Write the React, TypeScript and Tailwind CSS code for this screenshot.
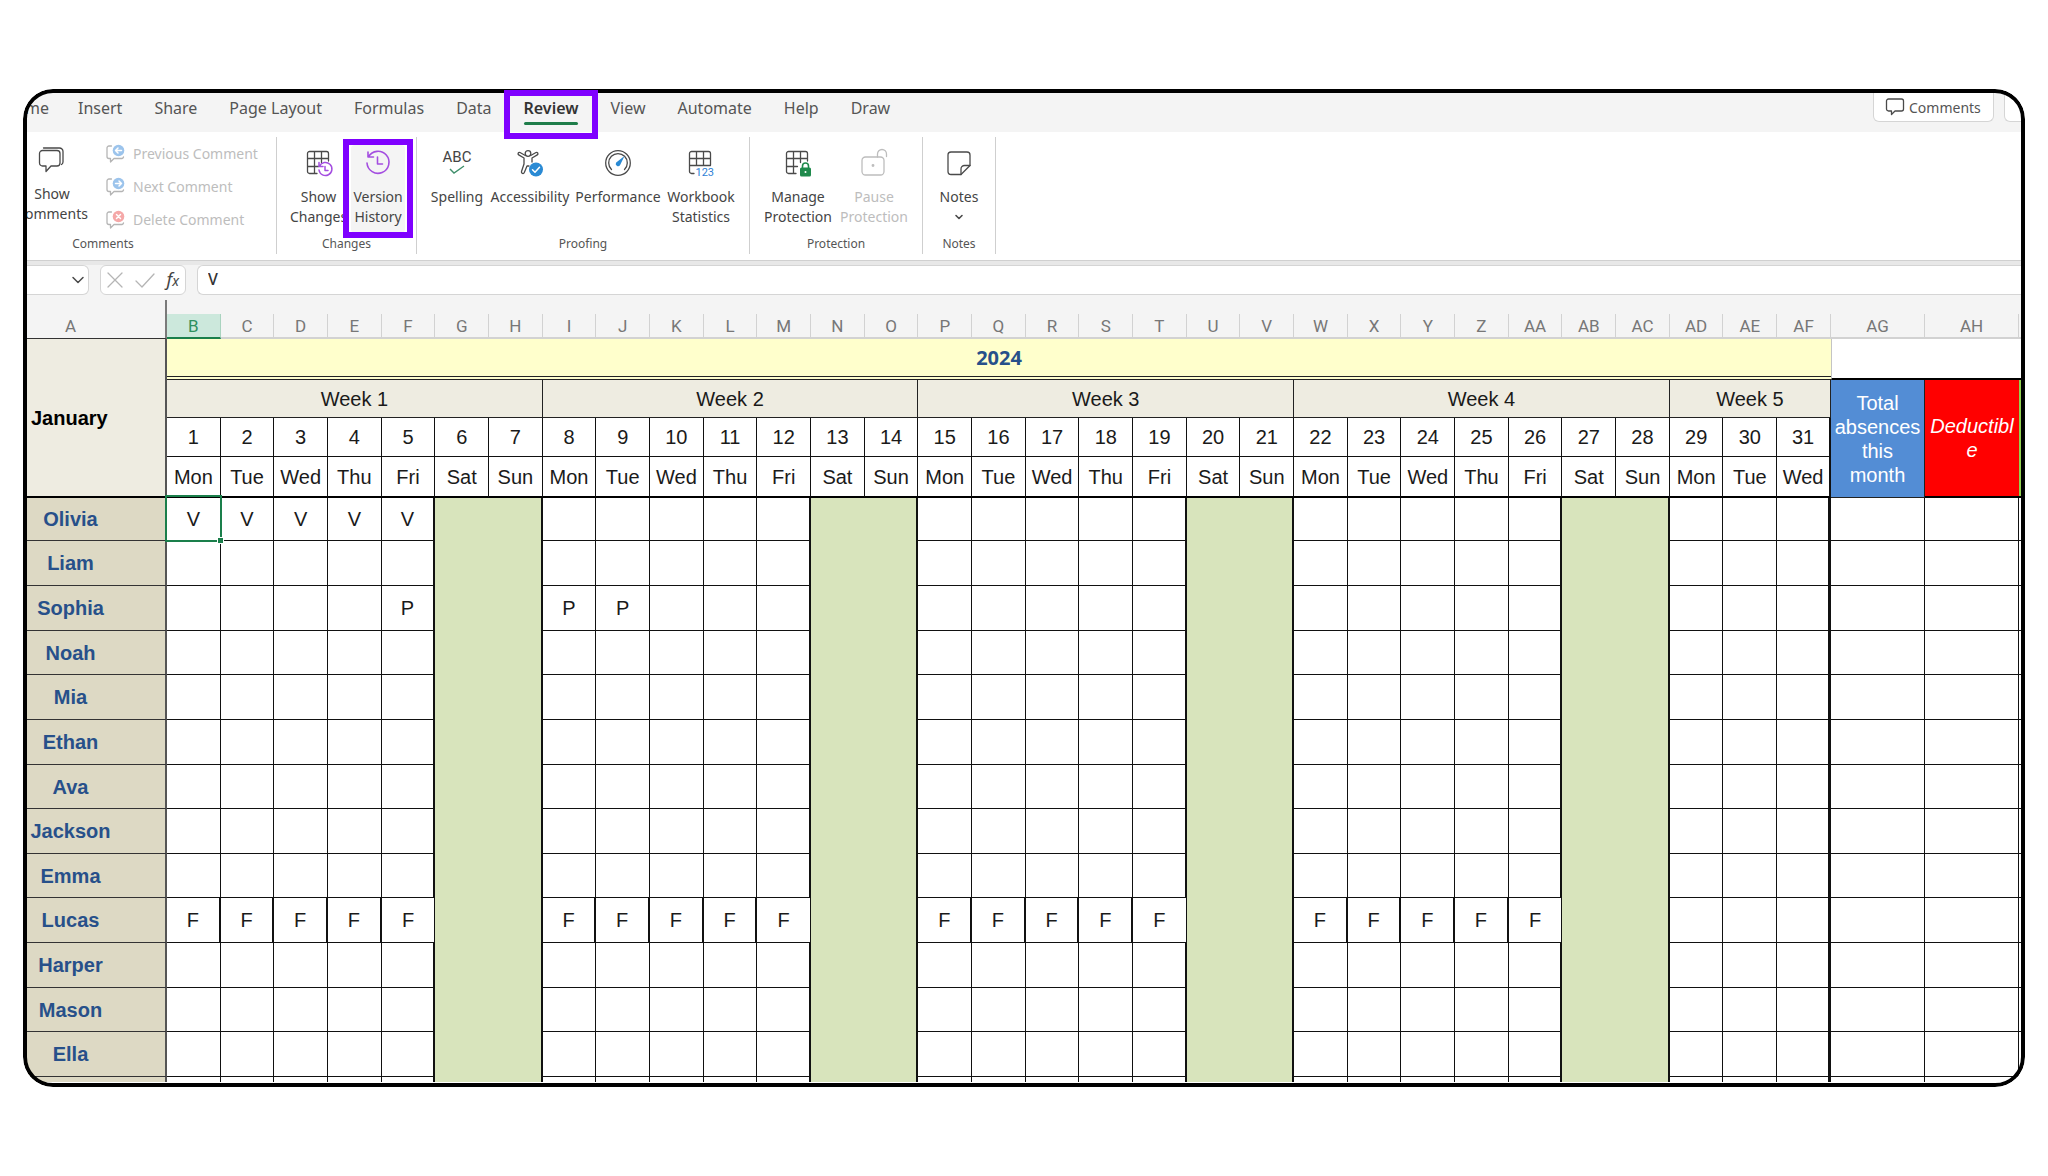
import type { ReactNode } from "react";

type IconProps = { children: ReactNode; className?: string; box?: string };

function Icon({ children, className = "size-7", box = "0 0 28 28" }: IconProps) {
  return (
    <svg
      viewBox={box}
      className={`overflow-visible ${className}`}
      fill="none"
      stroke="#4a4a4a"
      strokeWidth="1.3"
      strokeLinecap="round"
      strokeLinejoin="round"
      aria-hidden="true"
    >
      {children}
    </svg>
  );
}

const ShowCommentsIcon = () => (
  <Icon>
    <path d="M4.500 4.500H19a3 3 0 0 1 3 3V17a3 3 0 0 1-3 3H13L8 25.500V20H4.500a3 3 0 0 1-3-3V7.500a3 3 0 0 1 3-3Z" />
    <path d="M5.500 2H21.500a3.500 3.500 0 0 1 3.500 3.500v10.500a3 3 0 0 1-1.500 2.500" />
  </Icon>
);

const BubbleIcon = ({ color, mark }: { color: string; mark: string }) => (
  <Icon className="size-5" box="0 0 20 20">
    <path stroke="#b5b5b5" d="M6.500 2H4a2 2 0 0 0-2 2v8.500a2 2 0 0 0 2 2h1.500V18l3.500-3.500h8a2 2 0 0 0 1.500-1.500" />
    <circle cx="13.500" cy="6.500" r="5.800" fill={color} stroke="none" />
    <path stroke="#fff" strokeWidth="1.500" d={mark} />
  </Icon>
);

const GridLines = () => (
  <path d="M4.500 2.500h17a2 2 0 0 1 2 2V12M12 24.500H4.500a2 2 0 0 1-2-2v-18a2 2 0 0 1 2-2M2.500 9.500h21M2.500 17.500h11M9.500 2.500v22M16.500 2.500v11" />
);

const ShowChangesIcon = () => (
  <Icon>
    <GridLines />
    <g stroke="#a44ee0" strokeWidth="1.5">
      <path d="M14 13.500v4h4M14.500 17.300a6.500 6.500 0 1 1-.5 3.700" />
      <path d="M20 17.500v4h3" />
    </g>
  </Icon>
);

const HistoryIcon = () => (
  <Icon>
    <g stroke="#a44ee0" strokeWidth="1.6">
      <path d="M4 3v5h5.500M4.500 7.700A11 11 0 1 1 3 14" />
      <path d="M13.500 8v7h5" />
    </g>
  </Icon>
);

const SpellingIcon = () => (
  <span className="relative flex h-7 justify-center text-[15px] leading-4">
    <span className="font-['Roboto',sans-serif]">ABC</span>
    <svg viewBox="0 0 16 9" className="absolute top-4 h-[9px] w-4" fill="none" stroke="#3f8f6b" strokeWidth="1.4" aria-hidden="true">
      <path d="M1 4l4 4L15 1" />
    </svg>
  </span>
);

const AccessibilityIcon = () => (
  <Icon>
    <circle cx="12" cy="4.500" r="2.800" />
    <path d="M9.300 6.500 4 3.500C2.500 2.800 1.200 5 2.700 5.900L8 9v6l-2.500 7.500c-.5 2 2 2.800 2.800 1l2.700-6.500h2M14.700 6.500 20 3.500c1.500-.7 2.800 1.500 1.300 2.400L16 9v4" />
    <circle cx="20" cy="20.500" r="7" fill="#2a8ad4" stroke="none" />
    <path stroke="#fff" strokeWidth="1.500" d="m16.500 20.700 2.500 2.500 4.500-5" />
  </Icon>
);

const PerformanceIcon = () => (
  <Icon>
    <circle cx="14" cy="14" r="12.300" />
    <path d="M7.500 20.500a9.300 9.300 0 1 1 13 0" />
    <path fill="#2a8ad4" stroke="none" d="M20.500 7 16 16.200a2.300 2.300 0 0 1-3.800-2.700Z" />
  </Icon>
);

const StatisticsIcon = () => (
  <Icon>
    <path d="M4.500 2.500h17a2 2 0 0 1 2 2V16M7 24.500H4.500a2 2 0 0 1-2-2v-18a2 2 0 0 1 2-2M2.500 9.500h21M2.500 16.500h21M9.500 2.500v14M16.500 2.500v14" />
    <text x="8.500" y="27" fontSize="11" fontFamily="Roboto, sans-serif" fill="#2f7fd6" stroke="none">
      123
    </text>
  </Icon>
);

const ManageIcon = () => (
  <Icon>
    <GridLines />
    <path stroke="#1f8a4c" strokeWidth="1.600" d="M18.500 18.500V17a3 3 0 0 1 6 0v1.500" />
    <rect x="16" y="18.500" width="11" height="9" rx="1.500" fill="#1f8a4c" stroke="none" />
    <circle cx="21.500" cy="23" r="1" fill="#fff" stroke="none" />
  </Icon>
);

const PauseIcon = () => (
  <Icon>
    <g stroke="#bdbdbd">
      <rect x="2" y="8" width="22" height="18" rx="3.500" />
      <path d="M17.500 8V5a4.500 4.500 0 0 1 9 0v2.500" />
      <circle cx="13" cy="16.500" r=".8" fill="#bdbdbd" />
    </g>
  </Icon>
);

const NotesIcon = () => (
  <Icon>
    <path d="M6 3h16a3 3 0 0 1 3 3v10.500L16 25.500H6a3 3 0 0 1-3-3V6a3 3 0 0 1 3-3Z" />
    <path d="M16 25.500v-5.500a3.500 3.500 0 0 1 3.500-3.500H25" />
  </Icon>
);

type RibbonButtonProps = {
  icon: ReactNode;
  lines: ReactNode[];
  className: string;
  disabled?: boolean;
  children?: ReactNode;
};

function RibbonButton({ icon, lines, className, disabled, children }: RibbonButtonProps) {
  return (
    <button
      type="button"
      disabled={disabled}
      className={`relative flex h-[88px] flex-none flex-col items-center pt-1 text-[14px] leading-5 whitespace-nowrap text-[#444] disabled:text-[#bdbdbd] ${className}`}
    >
      <span className="mb-[10px] flex h-7 items-center">{icon}</span>
      {lines.map((line, i) => (
        <span key={i} className="flex h-5 items-center">
          {line}
        </span>
      ))}
      {children}
    </button>
  );
}

type GroupProps = { label: string; className: string; labelClass?: string; bodyClass?: string; children: ReactNode };

function Group({ label, className, labelClass = "", bodyClass = "pt-2", children }: GroupProps) {
  return (
    <section aria-label={label} className={`mt-[5px] mb-[6px] flex flex-none flex-col border-r border-[#cfcfcf] ${className}`}>
      <div className={`flex h-[99px] ${bodyClass}`}>{children}</div>
      <div className={`text-center text-[12px] leading-4 text-[#555] ${labelClass}`}>{label}</div>
    </section>
  );
}

const tabs = ["Insert", "Share", "Page Layout", "Formulas", "Data", "Review", "View", "Automate", "Help", "Draw"];

const commentActions = [
  { text: "Previous Comment", color: "#9cc4ec", mark: "M16.500 6.500h-6M13 4l-2.500 2.500L13 9" },
  { text: "Next Comment", color: "#9cc4ec", mark: "M10.500 6.500h6M14 4l2.500 2.500L14 9" },
  { text: "Delete Comment", color: "#f5a8a8", mark: "m11.500 4.500 4 4M15.500 4.500l-4 4" },
];

function MenuBar() {
  return (
    <nav aria-label="Ribbon tabs" className="flex h-[39px] bg-[#f4f4f4] text-[16px] text-[#555]">
      <button type="button" className="w-[22px] flex-none overflow-hidden pb-[10px]">
        <span className="float-right">Home</span>
      </button>
      <div className="ml-[13px] flex">
        {tabs.map((tab) =>
          tab === "Review" ? (
            <button key={tab} type="button" aria-current="page" className="relative px-4 pb-[10px] font-semibold text-[#333]">
              {tab}
              <span className="absolute inset-x-4 top-[29px] h-[3px] rounded-full bg-[#1f7d4a]" />
              <span className="absolute -top-[3px] -right-1 -bottom-[7px] -left-1 z-20 border-6 border-[#7f00ff]" />
            </button>
          ) : (
            <button key={tab} type="button" className="px-4 pb-[10px] whitespace-nowrap">
              {tab}
            </button>
          ),
        )}
      </div>
      <div className="ml-auto flex h-[29px] gap-[10px]">
        <button type="button" className="flex w-[121px] items-center gap-1 rounded-b-md border border-t-0 border-[#d5d5d5] bg-white pl-[11px] text-[14px]">
          <Icon className="size-5" box="0 0 20 20">
            <path d="M3.500 2h13a2 2 0 0 1 2 2v8a2 2 0 0 1-2 2H10l-3.500 3.500V14h-3a2 2 0 0 1-2-2V4a2 2 0 0 1 2-2Z" />
          </Icon>
          Comments
        </button>
        <button type="button" aria-label="Share options" className="w-[17px] rounded-bl-md border border-t-0 border-r-0 border-[#d5d5d5] bg-white" />
      </div>
    </nav>
  );
}

function Ribbon() {
  return (
    <div className="flex h-32 bg-white">
      <Group label="Comments" className="w-[250px]" labelClass="w-[152px]" bodyClass="pt-[5px]">
        <RibbonButton className="-ml-[15px] w-20" icon={<ShowCommentsIcon />} lines={["Show", "Comments"]} />
        <ul className="ml-[13px] flex flex-col pt-0.5">
          {commentActions.map((a) => (
            <li key={a.text} className="h-[33px] flex-none">
              <button type="button" disabled className="flex items-center gap-2 text-[14px] leading-5 whitespace-nowrap text-[#bdbdbd]">
                <BubbleIcon color={a.color} mark={a.mark} />
                {a.text}
              </button>
            </li>
          ))}
        </ul>
      </Group>
      <Group label="Changes" className="w-[140px]">
        <RibbonButton className="ml-[9px] w-[65px]" icon={<ShowChangesIcon />} lines={["Show", "Changes"]} />
        <RibbonButton className="w-[54px] rounded bg-[#f4f4f4]" icon={<HistoryIcon />} lines={["Version", "History"]}>
          <span className="absolute -inset-x-2 -top-[6px] -bottom-[5px] border-6 border-[#7f00ff]" />
        </RibbonButton>
      </Group>
      <Group label="Proofing" className="w-[333px]">
        <RibbonButton className="ml-[11px] w-[58px]" icon={<SpellingIcon />} lines={["Spelling"]} />
        <RibbonButton className="w-[88px]" icon={<AccessibilityIcon />} lines={["Accessibility"]} />
        <RibbonButton className="w-[88px]" icon={<PerformanceIcon />} lines={["Performance"]} />
        <RibbonButton className="w-[78px]" icon={<StatisticsIcon />} lines={["Workbook", "Statistics"]} />
      </Group>
      <Group label="Protection" className="w-[173px]">
        <RibbonButton className="ml-[10px] w-[76px]" icon={<ManageIcon />} lines={["Manage", "Protection"]} />
        <RibbonButton className="w-[76px]" icon={<PauseIcon />} lines={["Pause", "Protection"]} disabled />
      </Group>
      <Group label="Notes" className="w-[73px]">
        <RibbonButton
          className="w-[72px]"
          icon={<NotesIcon />}
          lines={[
            "Notes",
            <Icon key="more" className="h-[6px] w-2" box="0 0 8 6">
              <path strokeWidth="1.6" d="m1 1.500 3 3 3-3" />
            </Icon>,
          ]}
        />
      </Group>
    </div>
  );
}

function FormulaBar() {
  return (
    <div className="flex h-[35px] bg-[#f4f4f4]">
      <div className="flex w-full border-t border-[#d0d0d0] bg-[#e8e8e8] pt-1">
        <div className="flex w-full bg-[#f4f4f4]">
          <button type="button" aria-label="Name box" className="flex w-[62px] flex-none items-center justify-end rounded-r-md border border-l-0 border-[#d5d5d5] bg-white pr-1">
            <Icon className="h-2 w-3" box="0 0 12 8">
              <path strokeWidth="1.500" d="m1 1.500 5 5 5-5" />
            </Icon>
          </button>
          <div className="ml-[11px] flex w-[86px] flex-none items-center justify-between rounded-md border border-[#d5d5d5] bg-white px-[6px]">
            <button type="button" aria-label="Cancel">
              <Icon className="size-4" box="0 0 16 16">
                <path stroke="#b5b5b5" d="m1 1 14 14M15 1 1 15" />
              </Icon>
            </button>
            <button type="button" aria-label="Enter">
              <Icon className="h-4 w-5" box="0 0 20 16">
                <path stroke="#b5b5b5" d="m1 9 6 6L19 2" />
              </Icon>
            </button>
            <button type="button" aria-label="Insert function" className="font-['Noto_Sans',sans-serif] text-[18px] leading-5 text-[#444] italic">
              f<span className="text-[14px]">x</span>
            </button>
          </div>
          <input
            aria-label="Formula"
            defaultValue="V"
            className="ml-[11px] min-w-0 flex-1 rounded-l-md border border-r-0 border-[#d5d5d5] bg-white pb-[3px] pl-[10px] text-[16px] font-medium text-[#333] outline-none"
          />
        </div>
      </div>
    </div>
  );
}

const dayLetters = [
  "B", "C", "D", "E", "F", "G", "H", "I", "J", "K", "L", "M", "N", "O", "P", "Q",
  "R", "S", "T", "U", "V", "W", "X", "Y", "Z", "AA", "AB", "AC", "AD", "AE", "AF",
];
const weekdays = ["Mon", "Tue", "Wed", "Thu", "Fri", "Sat", "Sun"];
const days = dayLetters.map((_, i) => i + 1);

const people: { name: string; code?: string; on?: number[] }[] = [
  { name: "Olivia", code: "V", on: [1, 2, 3, 4, 5] },
  { name: "Liam" },
  { name: "Sophia", code: "P", on: [5, 8, 9] },
  { name: "Noah" },
  { name: "Mia" },
  { name: "Ethan" },
  { name: "Ava" },
  { name: "Jackson" },
  { name: "Emma" },
  { name: "Lucas", code: "F", on: [1, 2, 3, 4, 5, 8, 9, 10, 11, 12, 15, 16, 17, 18, 19, 22, 23, 24, 25, 26] },
  { name: "Harper" },
  { name: "Mason" },
  { name: "Ella" },
];

const rowHeight = (i: number) => (i === 0 ? "h-[43px]" : [3, 6, 8, 11].includes(i) ? "h-11" : "h-[45px]");

function dayCellClass(day: number, outlined: boolean) {
  const w = (day - 1) % 7;
  if (day === 31) return "border-r-3 border-b";
  if (w === 5) return "bg-[#d8e4bc]";
  if (w === 6) return "bg-[#d8e4bc] border-r-2";
  if (w === 4) return outlined ? "border-r border-b" : "border-r-2 border-b";
  return outlined ? "border-r-2 border-b" : "border-r border-b";
}

function Sheet() {
  return (
    <div className="bg-[#f4f4f4] pt-[5px] font-['Liberation_Sans',Arial,sans-serif] text-[20px] leading-6 text-[#1a1a1a]">
      <table className="w-full table-fixed border-separate border-spacing-0">
        <colgroup>
          <col className="w-[140px]" />
          {dayLetters.map((l) => (
            <col key={l} />
          ))}
          <col className="w-[94px]" />
          <col className="w-[94px]" />
          <col className="w-[2px]" />
        </colgroup>
        <thead>
          <tr className="h-[14px]">
            <td className="border-r-2 border-[#7a7a7a]" />
            <td colSpan={34} />
          </tr>
          <tr className="h-[25px] font-['Roboto',sans-serif] text-[17px] leading-5 text-[#777]">
            <th scope="col" className="border-r-2 border-b border-[#7a7a7a] border-b-[#333] p-0 pr-[51px] font-normal">
              A
            </th>
            {dayLetters.map((l) => (
              <th
                key={l}
                scope="col"
                className={
                  l === "B"
                    ? "border-r border-b-2 border-[#1a7f4b] border-r-[#a9d3bf] bg-[#cce8dc] p-0 font-normal text-[#2f9060]"
                    : "border-r border-b-2 border-[#d2d2d2] p-0 font-normal"
                }
              >
                {l}
              </th>
            ))}
            {["AG", "AH"].map((l) => (
              <th key={l} scope="col" className="border-r border-b-2 border-[#d2d2d2] p-0 font-normal">
                {l}
              </th>
            ))}
            <td className="border-b-2 border-[#d2d2d2]" />
          </tr>
          <tr className="h-[41px]">
            <th rowSpan={4} scope="rowgroup" className="border-r-2 border-b-2 border-[#555] border-b-black bg-[#eeece1] p-0 pl-1 text-left text-black">
              January
            </th>
            <th colSpan={31} className="border-b-4 border-double border-[#222] bg-[#ffffcc] p-0 font-['Open_Sans',sans-serif] text-[#27508a]">
              2024
            </th>
            <td colSpan={3} className="border-b-2 border-l border-black border-l-[#c4c4c4] bg-white" />
          </tr>
          <tr className="h-[38px]">
            {[1, 2, 3, 4].map((w) => (
              <th key={w} colSpan={7} className="border-r border-b border-[#222] bg-[#eeece1] p-0 font-normal">
                Week {w}
              </th>
            ))}
            <th colSpan={3} className="border-r border-b border-[#222] bg-[#eeece1] p-0 font-normal">
              Week 5
            </th>
            <th rowSpan={3} className="border-r border-b border-[#222] bg-[#538dd5] p-0 px-[3px] font-normal text-white">
              Total absences this month
            </th>
            <th rowSpan={3} className="border-b-2 border-black bg-[#ff0000] p-0 font-normal break-all text-white italic">
              Deductible
            </th>
            <td rowSpan={3} className="border-b-2 border-black bg-[#92d050]" />
          </tr>
          <tr className="h-[39px]">
            {days.map((d) => (
              <th key={d} className={`border-b border-[#111] bg-white p-0 font-normal ${d === 31 ? "border-r-2" : "border-r"}`}>
                {d}
              </th>
            ))}
          </tr>
          <tr className="h-[41px]">
            {days.map((d) => (
              <th key={d} className={`border-b-2 border-[#111] border-b-black bg-white p-0 font-normal ${d === 31 ? "border-r-2" : "border-r"}`}>
                {weekdays[(d - 1) % 7]}
              </th>
            ))}
          </tr>
        </thead>
        <tbody>
          {people.map((p, i) => (
            <tr key={p.name} className={`bg-white ${rowHeight(i)}`}>
              <th scope="row" className="border-r-2 border-b border-[#333] border-r-[#555] bg-[#ddd9c4] p-0 pr-[51px] text-[#27508a]">
                {p.name}
              </th>
              {days.map((d) => (
                <td
                  key={d}
                  className={`border-[#111] p-0 text-center ${i === 0 && d === 1 ? "relative" : ""} ${dayCellClass(d, p.name === "Lucas" && d < 29)}`}
                >
                  {p.on?.includes(d) ? p.code : null}
                  {i === 0 && d === 1 ? (
                    <>
                      <span className="absolute -inset-x-[2px] -top-[3px] -bottom-[2px] border-2 border-[#1a7f4b]" />
                      <span className="absolute -right-1 -bottom-1 size-[7px] border border-white bg-[#1a7f4b]" />
                    </>
                  ) : null}
                </td>
              ))}
              <td className="border-r border-b border-[#111]" />
              <td className="border-r border-b border-[#111]" />
              <td className="border-b border-[#111]" />
            </tr>
          ))}
          <tr className="h-[5px] bg-white">
            <td className="border-r-2 border-[#555] bg-[#ddd9c4] p-0" />
            {days.map((d) => (
              <td key={d} className={`border-[#111] p-0 ${dayCellClass(d, false)} border-b-0`} />
            ))}
            <td className="border-r border-[#111] p-0" />
            <td className="border-r border-[#111] p-0" />
            <td className="p-0" />
          </tr>
        </tbody>
      </table>
    </div>
  );
}

export default function App() {
  return (
    <main className="min-h-screen bg-white px-[23px] pt-[89px] font-['Noto_Sans','Open_Sans',sans-serif]">
      <div className="relative overflow-hidden rounded-[30px] p-1 pb-[5px]">
        <MenuBar />
        <Ribbon />
        <FormulaBar />
        <Sheet />
        <div className="pointer-events-none absolute inset-0 z-10 rounded-[30px] border-4 border-black" />
      </div>
    </main>
  );
}
